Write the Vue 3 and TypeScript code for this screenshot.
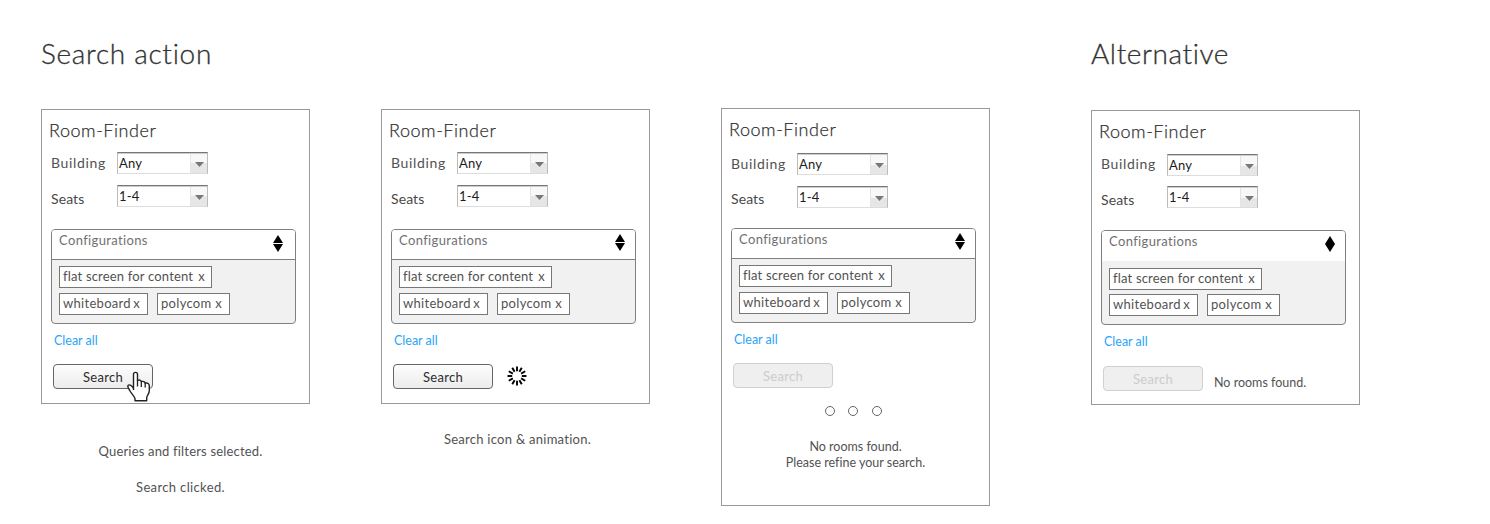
<script setup lang="ts">
interface Panel {
  id: string
  heading?: string
  state: 'hover' | 'loading' | 'empty' | 'alternative'
  captions: string[]
}

const panels: Panel[] = [
  { id: 'clicked', heading: 'Search action', state: 'hover', captions: ['Queries and filters selected.', 'Search clicked.'] },
  { id: 'loading', state: 'loading', captions: ['Search icon & animation.'] },
  { id: 'empty', state: 'empty', captions: [] },
  { id: 'alternative', heading: 'Alternative', state: 'alternative', captions: [] },
]

const tags: { label: string; kind: string }[] = [
  { label: 'flat screen for content', kind: 'wide' },
  { label: 'whiteboard', kind: 'mid' },
  { label: 'polycom', kind: 'small' },
]

const fields: { label: string; kind: string; value: string }[] = [
  { label: 'Building', kind: 'building', value: 'Any' },
  { label: 'Seats', kind: 'seats', value: '1-4' },
]

const spokes = Array.from({ length: 12 }, (_, i) => i * 30)
const isDisabled = (p: Panel) => p.state === 'empty' || p.state === 'alternative'
</script>

<template>
  <main class="board">
    <section v-for="p in panels" :key="p.id" class="column" :class="p.state">
      <h1 class="heading">{{ p.heading }}</h1>
      <article class="card">
        <h2 class="title">Room-Finder</h2>
        <div class="fields">
          <div v-for="f in fields" :key="f.kind" class="field" :class="f.kind">
            <span class="label">{{ f.label }}</span>
            <div class="select">
              <span class="value">{{ f.value }}</span>
              <span class="drop"><svg width="9" height="5" viewBox="0 0 9 5"><path d="M0 0H9L4.5 5Z" fill="#777" /></svg></span>
            </div>
          </div>
        </div>
        <div class="config">
          <div class="config-head">
            <span>Configurations</span>
            <svg v-if="p.state === 'alternative'" class="sorter" width="10" height="16" viewBox="0 0 10 16"><path d="M5 0L10 8L5 16L0 8Z" /></svg>
            <svg v-else class="sorter" width="10" height="17" viewBox="0 0 10 17"><path d="M5 0L10 8H0ZM0 9H10L5 17Z" /></svg>
          </div>
          <div class="tags">
            <span v-for="t in tags" :key="t.label" class="tag" :class="t.kind">
              <span class="tag-label">{{ t.label }}</span><span class="remove">x</span>
            </span>
          </div>
        </div>
        <a class="clear">Clear all</a>
        <div class="actions">
          <button class="search" :disabled="isDisabled(p)">
            Search
            <svg v-if="p.state === 'hover'" class="pointer" width="26" height="32" viewBox="0 0 26 32">
              <path d="M7.500 19V3.500C7.500 .6 11.500 .6 11.500 3.500V9.500C13 8.500 15 9 15.300 10.700C17 10 19 10.500 19.200 12.200C21.500 11.500 23.300 12.800 23.300 15V19.500C23.300 23 20.700 24.500 20.700 27V29.800H9V27.500C7.500 24 4.500 21.500 3.500 19C2.500 17.500 1.500 15.500 2 14.500C3.500 13 6 14.500 7.500 17.500" fill="#fff" stroke="#222" stroke-width="1.400" stroke-linejoin="round" />
              <path d="M11.500 9V15.500M15.300 10.500V16M19.200 12V16.500" fill="none" stroke="#222" stroke-width="1.300" />
            </svg>
          </button>
          <svg v-if="p.state === 'loading'" class="spinner" width="20" height="20" viewBox="-10 -10 20 20">
            <path v-for="a in spokes" :key="a" d="M0 -4.800V-9.500" :transform="`rotate(${a})`" stroke="#000" stroke-width="1.900" />
          </svg>
          <span v-if="p.state === 'alternative'" class="message">No rooms found.</span>
        </div>
        <template v-if="p.state === 'empty'">
          <svg class="dots" width="58" height="10" viewBox="0 0 58 10">
            <g fill="none" stroke="#666"><circle cx="5" cy="5" r="4.500" /><circle cx="28" cy="5" r="4.500" /><circle cx="52" cy="5" r="4.500" /></g>
          </svg>
          <p class="result">No rooms found.<br />Please refine your search.</p>
        </template>
      </article>
      <p v-for="c in p.captions" :key="c" class="caption">{{ c }}</p>
    </section>
  </main>
</template>

<style>
body {
  margin: 0;
  background: #fff;
}
</style>

<style scoped>
.board {
  display: grid;
  grid-template-columns: 269px 269px 299px 269px;
  column-gap: 71px;
  box-sizing: border-box;
  height: 524px;
  padding: 32px 0 0 41px;
  font-family: Lato, "Open Sans", sans-serif;
  font-size: 13px;
  font-variant-ligatures: none;
  color: #525252;
}
.column {
  --card-gap: 37px;
  --fields-top: 10px;
  --field-gap: 11px;
  --label-shift: 0px;
}
.column.empty {
  --card-gap: 36px;
  --fields-top: 12px;
  --label-shift: -1px;
}
.column.alternative {
  --card-gap: 38px;
  --fields-top: 11px;
  --field-gap: 10px;
  --label-shift: -1px;
}
.heading {
  height: 40px;
  margin: 0 0 var(--card-gap);
  font-size: 28px;
  font-weight: 300;
  line-height: 42px;
  letter-spacing: 0.7px;
  color: #333;
  -webkit-text-stroke: 0.3px #333;
  white-space: nowrap;
}
.alternative .heading {
  letter-spacing: 0.6px;
}
.card {
  box-sizing: border-box;
  width: 269px;
  height: 295px;
  border: 1px solid #999;
  padding: 8px 0 0 7px;
}
.empty .card {
  height: 398px;
}
.title {
  margin: 0;
  height: 24px;
  font-size: 18px;
  font-weight: 300;
  line-height: 24px;
  letter-spacing: 0.55px;
  color: #333;
  -webkit-text-stroke: 0.25px #333;
}
.fields {
  box-sizing: border-box;
  height: 87px;
  padding: var(--fields-top) 0 0 2px;
  display: flex;
  flex-direction: column;
  gap: var(--field-gap);
}
.field {
  display: grid;
  grid-template-columns: 66px 91px;
  height: 22px;
}
.label {
  font-size: 14px;
  line-height: 21px;
  letter-spacing: 0.65px;
  margin-top: var(--label-shift);
}
.empty .building .label {
  margin-top: 0;
}
.seats .label {
  margin-top: calc(3px + var(--label-shift));
  letter-spacing: 0.1px;
  color: #484848;
}
.alternative .seats .label {
  margin-top: 3px;
}
.select {
  box-sizing: border-box;
  display: flex;
  height: 22px;
  border: 1px solid #bbb;
  border-top: 1px solid #777;
  border-bottom-color: #ddd;
  box-shadow: inset 0 1px #ccc;
  color: #1c1c1c;
}
.value {
  flex: 1;
  padding-left: 1px;
  line-height: 20px;
  letter-spacing: 0.2px;
}
.drop {
  display: flex;
  align-items: center;
  justify-content: center;
  width: 16px;
  margin-top: 1px;
  background: linear-gradient(#f8f8f8 50%, #e6e6e6 50%);
  border-left: 1px solid #e4e4e4;
}
.drop svg {
  margin: 2px 0 0 1px;
}
.config {
  box-sizing: border-box;
  width: 245px;
  height: 95px;
  margin-left: 2px;
  border: 1px solid #808080;
  border-radius: 4px;
  background: #f1f1f1;
  overflow: hidden;
}
.config-head {
  box-sizing: border-box;
  display: flex;
  justify-content: space-between;
  height: 30px;
  padding: 0 10px 0 7px;
  border-bottom: 1px solid #808080;
  background: #fff;
  line-height: 20px;
  letter-spacing: 0.36px;
  color: #707070;
}
.alternative .config-head {
  border-bottom: 0;
}
.hover .config-head {
  padding-right: 12px;
}
.sorter {
  margin-top: 5px;
  fill: #000;
}
.loading .sorter,
.empty .sorter {
  margin-top: 4px;
}
.tags {
  display: flex;
  flex-wrap: wrap;
  gap: 5px 9px;
  padding: 6px 40px 0 7px;
}
.alternative .tags {
  gap: 4px 9px;
  padding-top: 7px;
}
.tag {
  box-sizing: border-box;
  display: flex;
  justify-content: space-between;
  height: 22px;
  border: 1px solid #777;
  padding: 0 7px 0 3px;
  background: #fff;
  line-height: 19px;
  letter-spacing: 0.3px;
  white-space: nowrap;
}
.tag.wide {
  width: 153px;
  padding-right: 6px;
  letter-spacing: 0.18px;
}
.tag.mid {
  width: 89px;
}
.tag.small {
  width: 73px;
}
.clear {
  display: block;
  margin: 5px 0 0 5px;
  height: 20px;
  font-size: 12.5px;
  line-height: 23px;
  color: #2ba4f6;
}
.alternative .clear {
  line-height: 24px;
}
.actions {
  display: flex;
  margin: 15px 0 0 4px;
}
.alternative .actions {
  margin-top: 16px;
}
.search {
  position: relative;
  box-sizing: border-box;
  width: 100px;
  height: 25px;
  padding: 1px 0 0;
  border: 1px solid #666;
  border-radius: 4px;
  background: linear-gradient(#fdfdfd, #ececec);
  font: inherit;
  line-height: 22px;
  letter-spacing: 0.3px;
  color: #2c2c2c;
}
.search:disabled {
  border-color: #d0d0d0;
  background: #efefef;
  color: #ccc;
}
.pointer {
  position: absolute;
  left: 72px;
  top: 6px;
}
.spinner {
  margin: 2px 0 0 14px;
}
.message {
  margin: 8px 0 0 11px;
  font-size: 12.5px;
  line-height: 17px;
}
.dots {
  display: block;
  margin: 18px 0 0 96px;
}
.result {
  margin: 23px 0 0 -7px;
  font-size: 12.5px;
  line-height: 16px;
  text-align: center;
}
.caption {
  margin: 0;
  line-height: 20px;
  letter-spacing: 0.27px;
  text-align: center;
}
.hover .caption {
  margin-top: 37px;
  padding-left: 10px;
  letter-spacing: 0.18px;
}
.hover .caption + .caption {
  margin-top: 16px;
  letter-spacing: 0.35px;
}
.loading .caption {
  margin-top: 25px;
  padding-left: 4px;
}
</style>
